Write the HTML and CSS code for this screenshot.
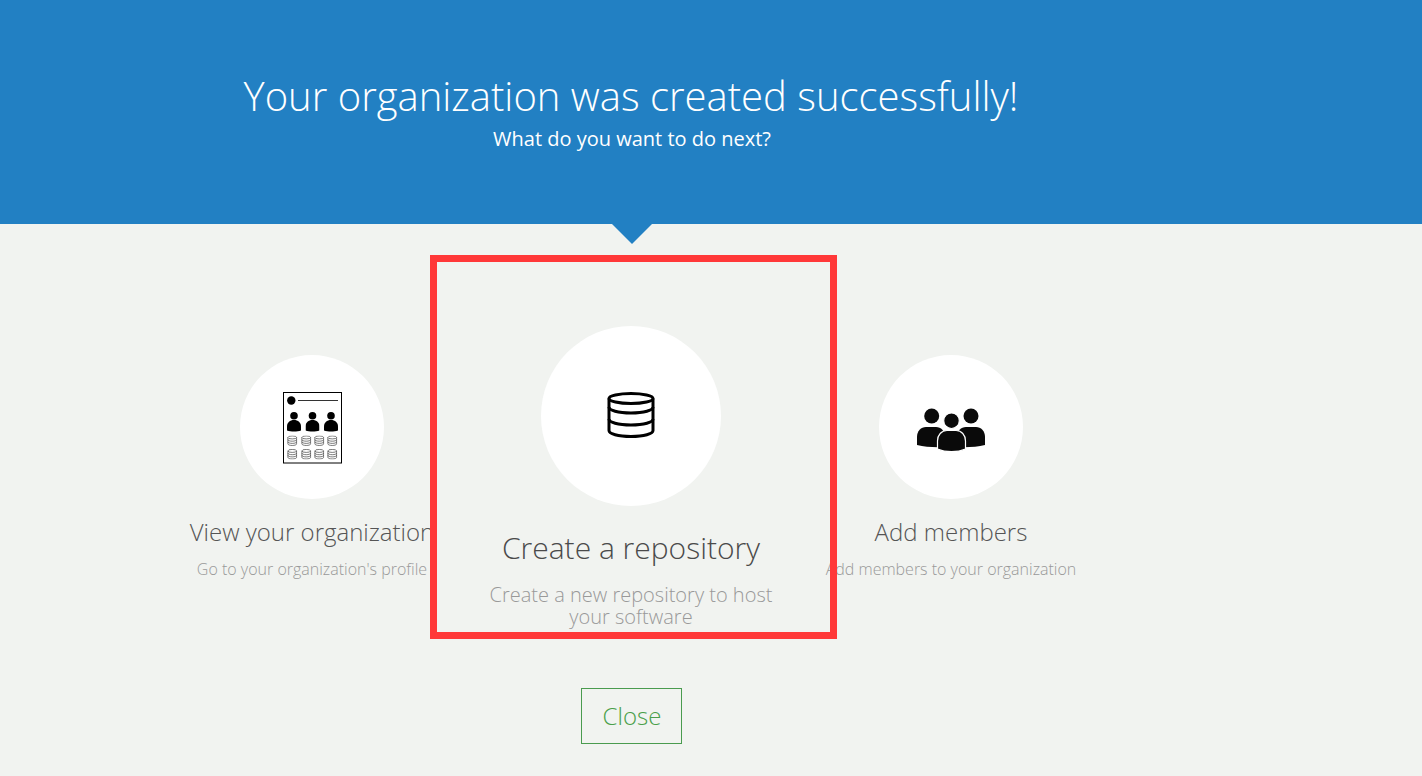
FILE: index.html
```html
<!DOCTYPE html>
<html lang="en">
<head>
    <meta charset="UTF-8">
    <meta name="viewport" content="width=device-width, initial-scale=1.0">
    <title>Organization created</title>
    <link rel="stylesheet" href="styles.css">
</head>
<body>
    <svg class="defs" width="0" height="0" aria-hidden="true">
        <symbol id="person" viewBox="0 0 14 20">
            <circle cx="7" cy="3.800" r="3.800"/>
            <path d="M0 18.500v-4C0 10.500 3 8 7 8s7 2.500 7 6.500v4c-4 1.300-10 1.300-14 0z"/>
        </symbol>
        <symbol id="stack" viewBox="0 0 12 12">
            <g fill="none" stroke="#444" stroke-width="0.8">
                <ellipse cx="6" cy="2.200" rx="5" ry="1.700"/>
                <path d="M1 2.200v7.400c0 1 2.200 1.800 5 1.800s5-.8 5-1.800V2.200M1 4.700c0 1 2.200 1.800 5 1.800s5-.8 5-1.800M1 7.200c0 1 2.200 1.800 5 1.800s5-.8 5-1.800"/>
            </g>
        </symbol>
    </svg>

    <div class="header">
        <div class="header-inner">
            <h1>Your organization was created successfully!</h1>
            <p>What do you want to do next?</p>
        </div>
        <div class="arrow"></div>
    </div>

    <div class="content">
        <div class="options">
            <div class="option">
                <div class="circle">
                    <svg class="icon icon-org" width="60" height="72" viewBox="0 0 60 72">
                        <rect x="0.500" y="0.500" width="58" height="70.500" fill="#fff" stroke="#000"/>
                        <circle cx="8.300" cy="8.500" r="4.200"/>
                        <path d="M15 8.500h40" stroke="#333" fill="none"/>
                        <use href="#person" x="4" y="20" width="14" height="20"/>
                        <use href="#person" x="22.500" y="20" width="14" height="20"/>
                        <use href="#person" x="41" y="20" width="14" height="20"/>
                        <use href="#stack" x="4" y="43.500" width="10.500" height="10.500"/>
                        <use href="#stack" x="18" y="43.500" width="10.500" height="10.500"/>
                        <use href="#stack" x="31" y="43.500" width="10.500" height="10.500"/>
                        <use href="#stack" x="44" y="43.500" width="10.500" height="10.500"/>
                        <use href="#stack" x="4" y="57" width="10.500" height="10.500"/>
                        <use href="#stack" x="18" y="57" width="10.500" height="10.500"/>
                        <use href="#stack" x="31" y="57" width="10.500" height="10.500"/>
                        <use href="#stack" x="44" y="57" width="10.500" height="10.500"/>
                    </svg>
                </div>
                <h2>View your organization</h2>
                <p>Go to your organization's profile</p>
            </div>

            <div class="option option-big">
                <div class="circle">
                    <svg class="icon icon-repo" width="48" height="46" viewBox="0 0 48 46" fill="none" stroke="#000" stroke-width="3">
                        <ellipse cx="24" cy="6.500" rx="22" ry="5"/>
                        <path d="M2 6.500V38.500c0 3.300 9 6 22 6s22-2.700 22-6V6.500"/>
                        <path d="M2 15c0 3.300 9 6 22 6s22-2.700 22-6"/>
                        <path d="M2 27c0 3.300 9 6 22 6s22-2.700 22-6"/>
                    </svg>
                </div>
                <h2>Create a repository</h2>
                <p>Create a new repository to host your software</p>
            </div>

            <div class="option">
                <div class="circle">
                    <svg class="icon icon-group" width="68" height="44" viewBox="0 0 68 44" fill="#0a0a0a">
                        <circle cx="14.700" cy="8" r="7.500"/>
                        <circle cx="54" cy="8" r="7.500"/>
                        <path d="M0 37V29C0 23 4 19 9 19h10c5 0 9 4 9 10v10C18 39.500 8 39 0 37z"/>
                        <path d="M68 37V29c0-6-4-10-9-10H49c-5 0-9 4-9 10v10c10 .5 20 0 28-2z"/>
                        <circle cx="34.500" cy="12.700" r="7.800" stroke="#fff" stroke-width="1.200"/>
                        <path d="M20.500 41V33c0-6 4-10.500 9.500-10.500h9c5.500 0 9.500 4.500 9.500 10.500v8c-8 3.600-20 3.600-28 0z" stroke="#fff" stroke-width="1.200"/>
                    </svg>
                </div>
                <h2>Add members</h2>
                <p>Add members to your organization</p>
            </div>
        </div>

        <div class="actions">
            <button class="close-button">Close</button>
        </div>
    </div>

    <div class="highlight"></div>
</body>
</html>
```

FILE: styles.css
```css
* {
    margin: 0;
    padding: 0;
    box-sizing: border-box;
    font-family: "Open Sans", "Liberation Sans", sans-serif;
}
body {
    background: #f1f3f0;
    overflow: hidden;
}
.defs {
    display: block;
    height: 0;
}
.header {
    background: #2280c3;
    color: white;
    height: 224px;
    position: relative;
}
.header-inner {
    width: 960px;
    margin-left: 151px;
    padding-top: 69px;
    text-align: center;
}
.header h1 {
    font-size: 40px;
    font-weight: 300;
    line-height: 54px;
}
.header p {
    font-size: 20px;
    line-height: 28px;
    margin-top: 2px;
    padding-left: 2px;
}
.arrow {
    position: absolute;
    left: 612px;
    top: 224px;
    width: 0;
    height: 0;
    border-left: 20px solid transparent;
    border-right: 20px solid transparent;
    border-top: 20px solid #2280c3;
}
.content {
    width: 960px;
    margin-left: 152px;
    padding-top: 102px;
}
.options {
    display: grid;
    grid-template-columns: 320px 318px 322px;
    align-items: start;
}
.option {
    padding-top: 29px;
    text-align: center;
}
.circle {
    width: 144px;
    height: 144px;
    margin: 0 auto;
    background: white;
    border-radius: 50%;
    display: flex;
    align-items: center;
    justify-content: center;
}
.icon-org {
    margin: 2px 0 0 2px;
}
.icon-repo {
    margin-bottom: 2px;
}
.icon-group {
    margin-top: 6px;
}
.option h2 {
    color: #555;
    font-size: 24px;
    font-weight: 300;
    line-height: 32px;
    margin-top: 17px;
    white-space: nowrap;
}
.option p {
    color: #999;
    font-size: 16px;
    font-weight: 300;
    line-height: 18px;
    margin-top: 12px;
    white-space: nowrap;
}
.option-big {
    padding-top: 0;
}
.option-big .circle {
    width: 180px;
    height: 180px;
}
.option-big h2 {
    color: #4a4a4a;
    font-size: 30px;
    line-height: 40px;
    margin-top: 22px;
}
.option-big p {
    font-size: 20px;
    line-height: 22.5px;
    margin: 15.5px auto 0;
    width: 300px;
    white-space: normal;
}
.actions {
    margin-top: 59.5px;
    padding-right: 2px;
    text-align: center;
}
.close-button {
    width: 101px;
    height: 56px;
    background: transparent;
    border: 1px solid #4a9b4f;
    color: #4a9f4a;
    font-size: 24px;
    font-weight: 300;
    padding: 0 0 2px 2px;
    cursor: pointer;
}
.highlight {
    position: absolute;
    left: 430px;
    top: 255px;
    width: 407px;
    height: 384px;
    border: 7px solid #ff3838;
}
```
